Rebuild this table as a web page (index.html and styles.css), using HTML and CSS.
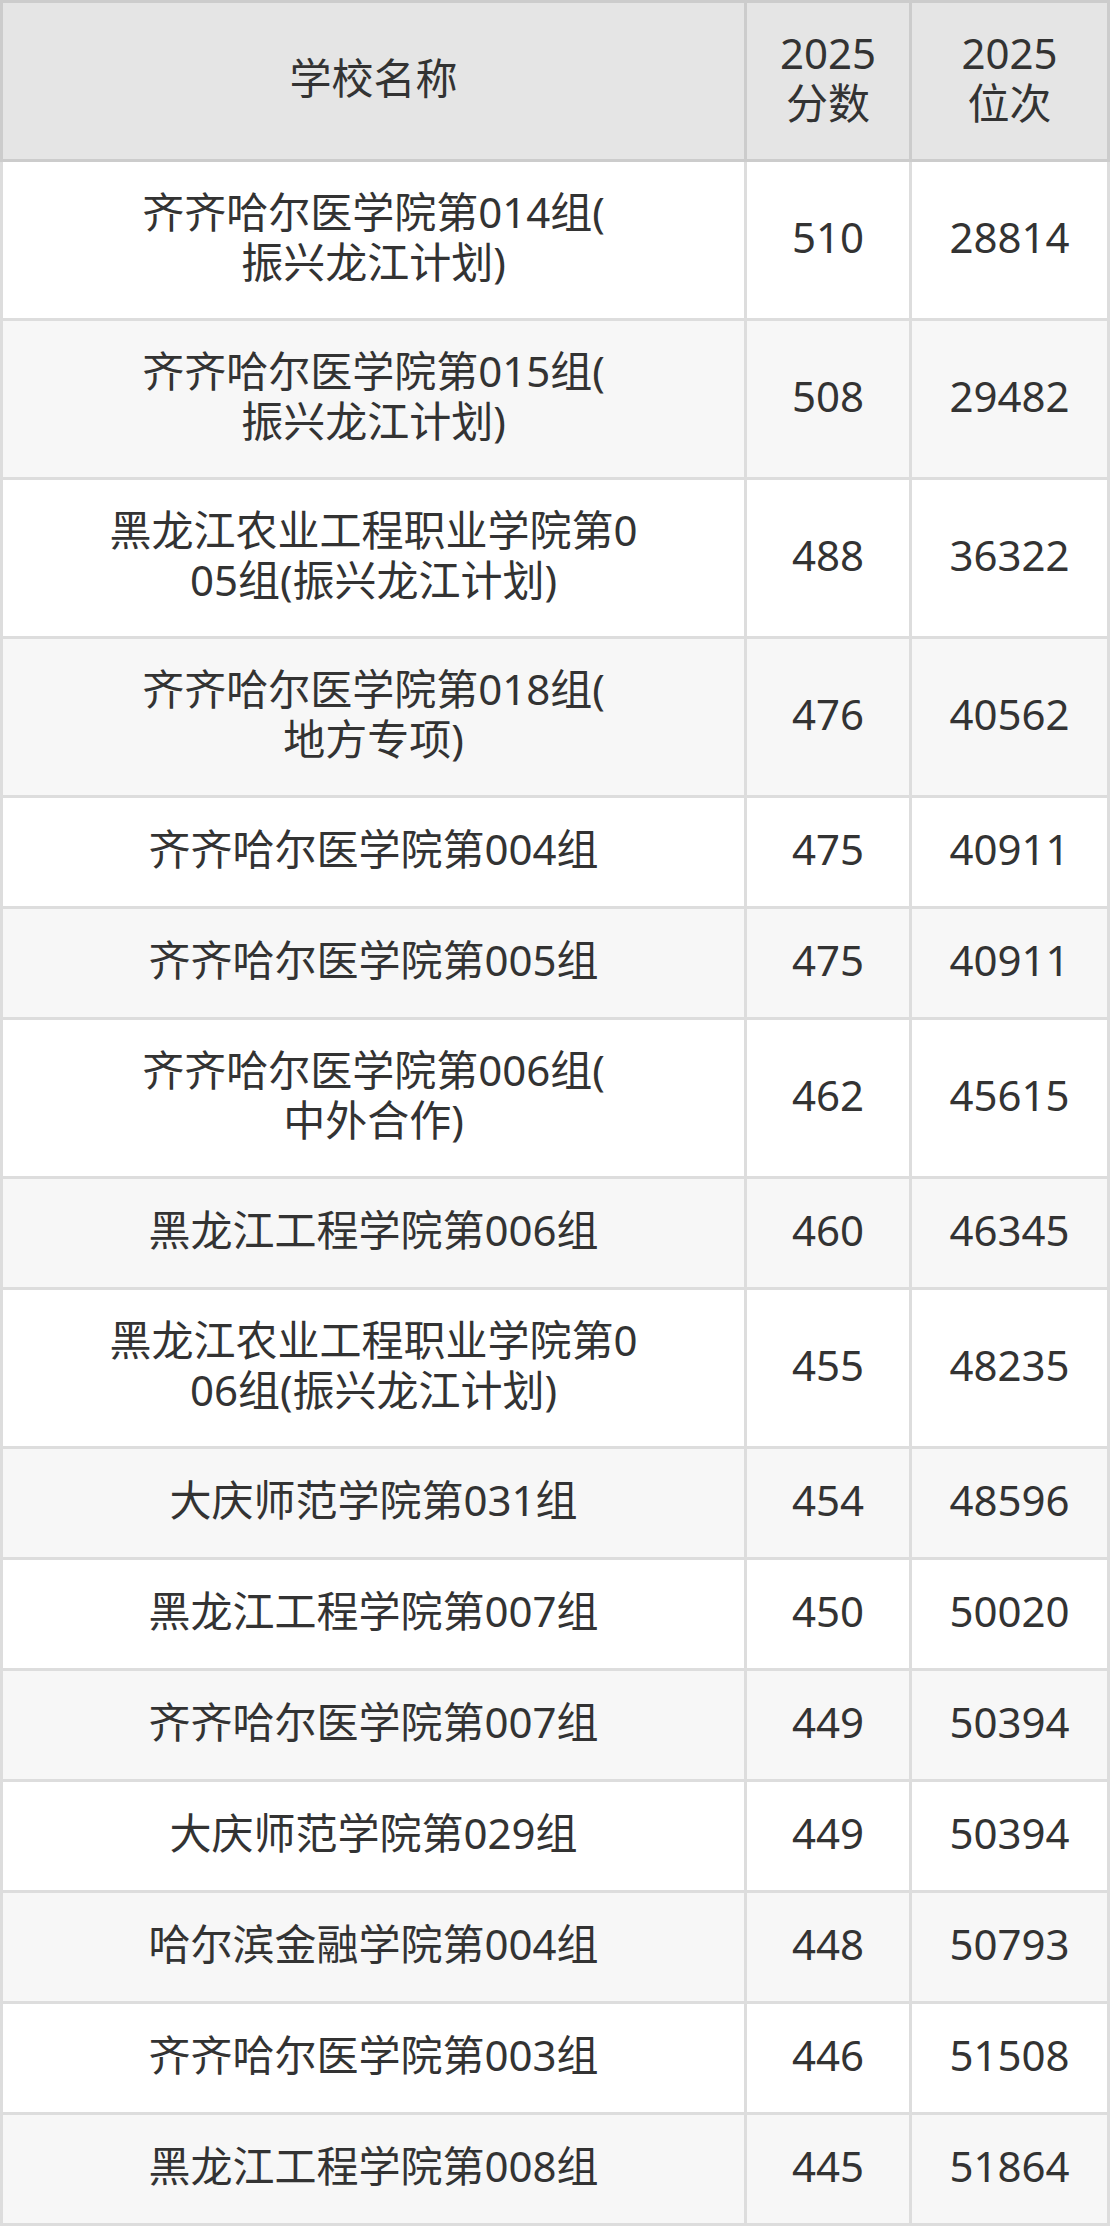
FILE: index.html
```html
<!DOCTYPE html>
<html lang="zh-CN">
<head>
<meta charset="utf-8">
<title>分数位次</title>
<link rel="stylesheet" href="styles.css">
</head>
<body>
<table class="score-table">
  <thead>
    <tr class="head-row">
      <th class="c-name">学校名称</th>
      <th class="c-score">2025<br>分数</th>
      <th class="c-rank">2025<br>位次</th>
    </tr>
  </thead>
  <tbody>
    <tr class="tall"><td class="c-name">齐齐哈尔医学院第014组(<br>振兴龙江计划)</td><td class="c-score">510</td><td class="c-rank">28814</td></tr>
    <tr class="tall"><td class="c-name">齐齐哈尔医学院第015组(<br>振兴龙江计划)</td><td class="c-score">508</td><td class="c-rank">29482</td></tr>
    <tr class="tall"><td class="c-name">黑龙江农业工程职业学院第0<br>05组(振兴龙江计划)</td><td class="c-score">488</td><td class="c-rank">36322</td></tr>
    <tr class="tall"><td class="c-name">齐齐哈尔医学院第018组(<br>地方专项)</td><td class="c-score">476</td><td class="c-rank">40562</td></tr>
    <tr class="short"><td class="c-name">齐齐哈尔医学院第004组</td><td class="c-score">475</td><td class="c-rank">40911</td></tr>
    <tr class="short"><td class="c-name">齐齐哈尔医学院第005组</td><td class="c-score">475</td><td class="c-rank">40911</td></tr>
    <tr class="tall"><td class="c-name">齐齐哈尔医学院第006组(<br>中外合作)</td><td class="c-score">462</td><td class="c-rank">45615</td></tr>
    <tr class="short"><td class="c-name">黑龙江工程学院第006组</td><td class="c-score">460</td><td class="c-rank">46345</td></tr>
    <tr class="tall"><td class="c-name">黑龙江农业工程职业学院第0<br>06组(振兴龙江计划)</td><td class="c-score">455</td><td class="c-rank">48235</td></tr>
    <tr class="short"><td class="c-name">大庆师范学院第031组</td><td class="c-score">454</td><td class="c-rank">48596</td></tr>
    <tr class="short"><td class="c-name">黑龙江工程学院第007组</td><td class="c-score">450</td><td class="c-rank">50020</td></tr>
    <tr class="short"><td class="c-name">齐齐哈尔医学院第007组</td><td class="c-score">449</td><td class="c-rank">50394</td></tr>
    <tr class="short"><td class="c-name">大庆师范学院第029组</td><td class="c-score">449</td><td class="c-rank">50394</td></tr>
    <tr class="short"><td class="c-name">哈尔滨金融学院第004组</td><td class="c-score">448</td><td class="c-rank">50793</td></tr>
    <tr class="short"><td class="c-name">齐齐哈尔医学院第003组</td><td class="c-score">446</td><td class="c-rank">51508</td></tr>
    <tr class="short"><td class="c-name">黑龙江工程学院第008组</td><td class="c-score">445</td><td class="c-rank">51864</td></tr>
  </tbody>
</table>
</body>
</html>
```

FILE: styles.css
```css
html, body {
  margin: 0;
  padding: 0;
  background: #ffffff;
}

.score-table {
  width: 1110px;
  table-layout: fixed;
  border-collapse: separate;
  border-spacing: 0;
  font-family: "Noto Sans", "Noto Sans CJK SC", sans-serif;
  font-size: 42px;
  line-height: 50px;
  color: #333333;
}

.score-table th,
.score-table td {
  box-sizing: border-box;
  padding: 0 8px 7px;
  text-align: center;
  vertical-align: middle;
  font-weight: normal;
  border-right: 3px solid #dddddd;
  border-bottom: 3px solid #dddddd;
}

.score-table .c-name {
  width: 747px;
  border-left: 3px solid #dddddd;
}

.score-table .c-score {
  width: 165px;
}

.score-table .c-rank {
  width: 198px;
}

.head-row th {
  height: 162px;
  background: #e5e5e5;
  border-top: 3px solid #cccccc;
  border-right-color: #cccccc;
  border-bottom-color: #cccccc;
}

.head-row th.c-name {
  border-left-color: #cccccc;
}

.tall td {
  height: 159px;
}

.short td {
  height: 111px;
}

tbody tr:nth-child(odd) td {
  background: #ffffff;
}

tbody tr:nth-child(even) td {
  background: #f7f7f7;
}
```
